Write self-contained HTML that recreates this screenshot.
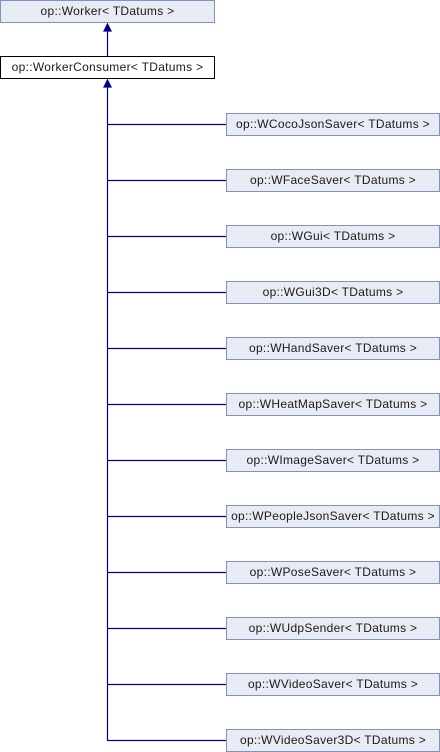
<!DOCTYPE html><html><head><style>
body{margin:0;width:440px;height:752px;background:#fff;position:relative;overflow:hidden;font-family:"Liberation Sans",sans-serif;}
.b{position:absolute;box-sizing:border-box;height:23px;border:1px solid #7b93c7;background:#e8ebf4;font-size:12px;letter-spacing:0.3px;line-height:21px;text-align:center;color:#1a1a1a;white-space:nowrap}
.c{left:226px;width:214px}
</style></head><body>
<svg width="440" height="752" style="position:absolute;left:0;top:0">
<g stroke="#00008b" stroke-width="1.2" fill="#00008b">
<line x1="107.5" y1="30" x2="107.5" y2="56"/>
<polygon points="107.5,24 104,31 111,31"/>
<line x1="107.5" y1="86" x2="107.5" y2="741"/>
<polygon points="107.5,80 104,87 111,87"/>
<line x1="107.5" y1="124.5" x2="226" y2="124.5"/><line x1="107.5" y1="180.5" x2="226" y2="180.5"/><line x1="107.5" y1="236.5" x2="226" y2="236.5"/><line x1="107.5" y1="292.5" x2="226" y2="292.5"/><line x1="107.5" y1="348.5" x2="226" y2="348.5"/><line x1="107.5" y1="404.5" x2="226" y2="404.5"/><line x1="107.5" y1="460.5" x2="226" y2="460.5"/><line x1="107.5" y1="516.5" x2="226" y2="516.5"/><line x1="107.5" y1="572.5" x2="226" y2="572.5"/><line x1="107.5" y1="628.5" x2="226" y2="628.5"/><line x1="107.5" y1="684.5" x2="226" y2="684.5"/><line x1="107.5" y1="740.5" x2="226" y2="740.5"/>
</g></svg>
<div class="b" style="left:0;top:0;width:215px">op::Worker&lt; TDatums &gt;</div>
<div class="b" style="left:0;top:56px;width:215px;background:#fff;border-color:#000">op::WorkerConsumer&lt; TDatums &gt;</div>
<div class="b c" style="top:113px">op::WCocoJsonSaver&lt; TDatums &gt;</div>
<div class="b c" style="top:169px">op::WFaceSaver&lt; TDatums &gt;</div>
<div class="b c" style="top:225px">op::WGui&lt; TDatums &gt;</div>
<div class="b c" style="top:281px">op::WGui3D&lt; TDatums &gt;</div>
<div class="b c" style="top:337px">op::WHandSaver&lt; TDatums &gt;</div>
<div class="b c" style="top:393px">op::WHeatMapSaver&lt; TDatums &gt;</div>
<div class="b c" style="top:449px">op::WImageSaver&lt; TDatums &gt;</div>
<div class="b c" style="top:505px">op::WPeopleJsonSaver&lt; TDatums &gt;</div>
<div class="b c" style="top:561px">op::WPoseSaver&lt; TDatums &gt;</div>
<div class="b c" style="top:617px">op::WUdpSender&lt; TDatums &gt;</div>
<div class="b c" style="top:673px">op::WVideoSaver&lt; TDatums &gt;</div>
<div class="b c" style="top:729px">op::WVideoSaver3D&lt; TDatums &gt;</div>
</body></html>
